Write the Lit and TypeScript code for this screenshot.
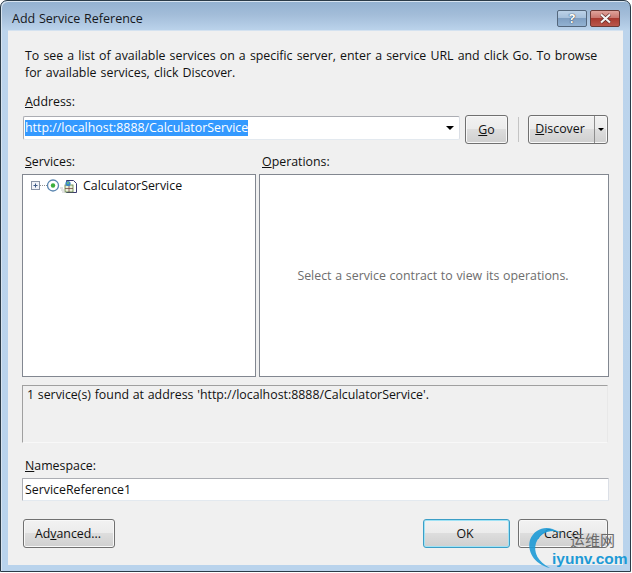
import { LitElement, html, css, svg } from "lit";
import { customElement } from "lit/decorators.js";

@customElement("app-root")
export class AppRoot extends LitElement {
  static styles = css`
    :host { display: block; width: 632px; height: 573px; position: relative; overflow: hidden; background: #fff;
      font-family: "Open Sans", "Noto Sans", sans-serif; font-size: 12.36px; word-spacing: 0.5px; color: #111; }
    * { box-sizing: border-box; }
    u { text-decoration: underline; text-underline-offset: 1px; }
    .window { width: 631px; height: 572px; display: flex; flex-direction: column; border: 1px solid #2b3b48; border-radius: 7px 7px 0 0;
      background: linear-gradient(180deg, #93b1d0 0, #a3bdd9 14px, #bcd4ec 30px, #b9d3ec 100%); padding: 0 7px 6px 7px; box-shadow: inset 1px 1px 0 #d8e4f0; }
    .title { height: 29px; flex: none; display: flex; align-items: center; padding: 5px 3px 0 4px; font-size: 12.5px; color: #15181c; }
    .title span { flex: 1; }
    .cap { height: 17px; width: 30px; border-radius: 2px; border: 1px solid #54677c; display: flex; align-items: center; justify-content: center; }
    .help { margin-right: 3px; background: linear-gradient(180deg, #bcd2e8 0, #a6c0db 45%, #7f9fc2 50%, #93b2d2 100%); color: #fff; font-weight: 700; font-size: 13px; word-spacing: 0; text-shadow: 0 0 1px #26384c, 0 0 1px #26384c; }
    .close { border-color: #6b3a36; background: linear-gradient(180deg, #dfa39b 0, #c9776f 45%, #a83a30 50%, #b9574c 100%); }
    .client { flex: 1; background: #f0f0f0; padding: 16px 14px 17px 14px; display: flex; flex-direction: column; position: relative; border-top: 1px solid #d4e2f0; }
    .intro { margin: 0 0 0 3px; line-height: 17px; height: 34px; word-spacing: 0.95px; white-space: nowrap; }
    .lab { line-height: 16px; height: 16px; margin-left: 3px; }
    .addr-lab { margin-top: 13px; }
    .addr-row { display: flex; align-items: flex-start; margin-top: 5px; }
    .combo { width: 437px; margin: 1px 5px 0 1px; height: 24px; border: 1px solid #abadb3; border-right-color: #dbdfe6; border-bottom-color: #e3e9ef; border-radius: 2px; background: #fff; display: flex; align-items: center; padding-left: 1px; }
    .combo .sel { background: #3399ff; color: #fff; line-height: 16px; height: 16px; }
    .combo .sp { flex: 1; }
    .arrow { width: 0; height: 0; border-left: 4px solid transparent; border-right: 4px solid transparent; border-top: 4px solid #000; margin-right: 5px; }
    .btn { height: 29px; border: 1px solid #707070; border-radius: 3px; background: linear-gradient(180deg, #f2f2f2 0, #ebebeb 48%, #dddddd 50%, #cfcfcf 100%); box-shadow: inset 0 0 0 1px #f8f8f8; display: flex; align-items: center; justify-content: center; color: #111; }
    .go { width: 43px; }
    .vsep { width: 1px; height: 25px; background: #c4c4c4; margin: 2px 9px 0 10px; }
    .disc { width: 80px; padding: 0; justify-content: flex-start; }
    .disc .t { width: 66px; padding-right: 3px; text-align: center; border-right: 1px solid #8d8d8d; height: 27px; line-height: 26px; }
    .disc .a { flex: 1; display: flex; justify-content: center; }
    .disc .a i { width: 0; height: 0; border-left: 3px solid transparent; border-right: 3px solid transparent; border-top: 3px solid #000; }
    .heads { display: flex; margin-top: 10px; }
    .heads .lab:first-child { width: 234px; }
    .panes { display: flex; gap: 3px; margin-top: 4px; height: 203px; }
    .pane { background: #fff; border: 1px solid #828790; height: 203px; }
    .tree { width: 234px; padding: 2px 0 0 7px; display: flex; height: 203px; align-items: flex-start; }
    .tree .row { display: flex; align-items: center; height: 18px; }
    .tree .name { margin-left: -1px; margin-top: -1px; }
    .ops { width: 350px; display: flex; align-items: center; justify-content: center; color: #6d6d6d; padding: 0 2px 0 0; }
    .status { margin-top: 8px; height: 58px; width: 586px; border: 1px solid #a0a0a0; border-right-color: #e8e8e8; border-bottom-color: #f8f8f8; padding: 1px 4px; line-height: 16px; }
    .ns-lab { margin-top: 15px; }
    .ns { margin-top: 4px; width: 587px; height: 23px; background: #fff; border: 1px solid #abadb3; border-right-color: #dbdfe6; border-bottom-color: #e3e9ef; border-radius: 1px; padding: 0 2px 0 2px; line-height: 21px; }
    .foot { display: flex; margin-top: 18px; padding: 0 1px; }
    .adv { width: 92px; padding-right: 2px; }
    .foot .grow { flex: 1; }
    .ok { width: 87px; margin-right: 8px; padding-right: 3px; border-color: #3c9ec6; box-shadow: inset 0 0 0 1px #9fe2f5; }
    .cancel { width: 90px; }
    .mark { position: absolute; left: 525px; top: 525px; width: 107px; height: 48px; pointer-events: none; }
    .mark svg { position: absolute; left: 2px; top: 0; }
    .mark .cn { position: absolute; left: 45px; top: 5px; font-family: "Noto Sans CJK SC", sans-serif; font-size: 15px; word-spacing: 0; color: #6b6b6b; line-height: 20px; }
    .mark .en { position: absolute; left: 27px; top: 25px; font-family: "Liberation Sans", sans-serif; font-weight: 700; font-size: 15.5px; color: #1d9ad6; line-height: 18px; }
  `;

  private treeIcons() {
    return svg`<svg width="54" height="18" viewBox="0 0 54 18">
      <rect x="1.5" y="4.5" width="8" height="8" fill="#f0f2f8" stroke="#8a94a6"/>
      <path d="M3.5 8.5h4M5.5 6.5v4" stroke="#3d5a86"/>
      <path d="M10 8.5h8" stroke="#909090" stroke-dasharray="1 1"/>
      <circle cx="23" cy="8.5" r="5.5" fill="#fff" stroke="#5a86b0" stroke-width="1.3"/>
      <circle cx="23" cy="8.5" r="2.2" fill="#3cae3c"/>
      <path d="M36.5 3.5h7l3 3v9h-10z" fill="#fff" stroke="#3a3a70"/>
      <rect x="35" y="8" width="8" height="7" fill="#e8f0d8" stroke="#5a7a3a" stroke-width="0.8"/>
      <path d="M35 11.5h8M39 8v7" stroke="#7a4a4a" stroke-width="0.8"/>
      <circle cx="38" cy="6.5" r="2.6" fill="#3d86c6"/>
      <circle cx="38" cy="6" r="1" fill="#6ac46a"/>
      <path d="M30 11h3M31 13h3M32 15h3" stroke="#c8c8c8"/>
    </svg>`;
  }

  render() {
    return html`
      <div class="window">
        <div class="title">
          <span>Add Service Reference</span>
          <div class="cap help">?</div>
          <div class="cap close">
            <svg width="15" height="11" viewBox="0 0 15 11"><path d="M3 1.5l9 8M12 1.5l-9 8" stroke="#5a2420" stroke-width="3.4"/><path d="M3 1.5l9 8M12 1.5l-9 8" stroke="#f4f4f4" stroke-width="2.2"/></svg>
          </div>
        </div>
        <div class="client">
          <p class="intro">To see a list of available services on a specific server, enter a service URL and click Go. To browse<br>for available services, click Discover.</p>
          <div class="lab addr-lab"><u>A</u>ddress:</div>
          <div class="addr-row">
            <div class="combo"><span class="sel">http://localhost:8888/CalculatorService</span><span class="sp"></span><span class="arrow"></span></div>
            <div class="btn go"><span><u>G</u>o</span></div>
            <div class="vsep"></div>
            <div class="btn disc"><span class="t"><u>D</u>iscover</span><span class="a"><i></i></span></div>
          </div>
          <div class="heads"><div class="lab"><u>S</u>ervices:</div><div class="lab"><u>O</u>perations:</div></div>
          <div class="panes">
            <div class="pane tree"><div class="row">${this.treeIcons()}<span class="name">CalculatorService</span></div></div>
            <div class="pane ops">Select a service contract to view its operations.</div>
          </div>
          <div class="status">1 service(s) found at address 'http://localhost:8888/CalculatorService'.</div>
          <div class="lab ns-lab"><u>N</u>amespace:</div>
          <div class="ns">ServiceReference1</div>
          <div class="foot">
            <div class="btn adv"><span>Ad<u>v</u>anced...</span></div>
            <div class="grow"></div>
            <div class="btn ok">OK</div>
            <div class="btn cancel">Cancel</div>
          </div>
        </div>
      </div>
      <div class="mark">
        <svg width="50" height="48" viewBox="0 0 50 48">
          <path d="M31 7C22 0 8 2 3 15c-3 10 3 24 20 28C11 37 6 27 9 18 13 8 23 4 31 7z" fill="#1d9ad6" fill-opacity="0.9"/>
          <path d="M34 8C25 3 14 6 11 14" fill="none" stroke="#1d9ad6" stroke-width="0.8"/>
        </svg>
        <span class="cn">运维网</span>
        <span class="en">iyunv.com</span>
      </div>
    `;
  }
}
